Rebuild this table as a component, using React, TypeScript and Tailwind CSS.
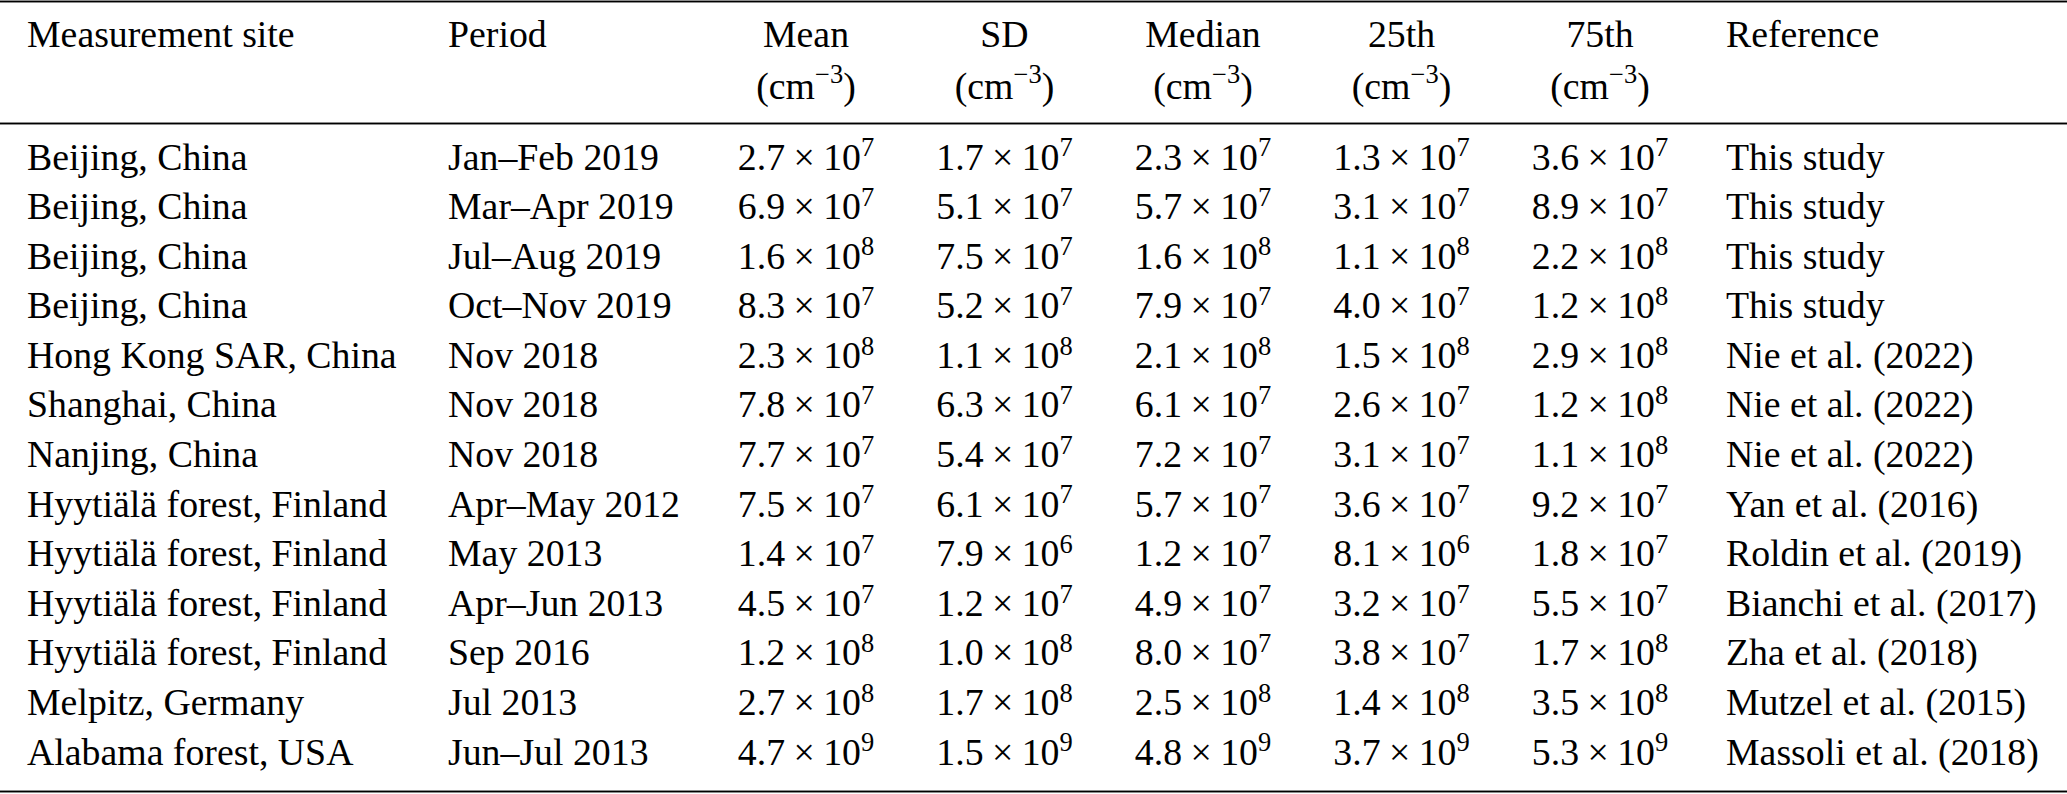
import React from "react";

// Table: gas-phase concentrations at several sites, booktabs style.
type Num = [string, number];
type Row = {
  site: string;
  period: string;
  vals: Num[];
  ref: string;
};

const rows: Row[] = [
  { site: "Beijing, China", period: "Jan–Feb 2019", vals: [["2.7", 7], ["1.7", 7], ["2.3", 7], ["1.3", 7], ["3.6", 7]], ref: "This study" },
  { site: "Beijing, China", period: "Mar–Apr 2019", vals: [["6.9", 7], ["5.1", 7], ["5.7", 7], ["3.1", 7], ["8.9", 7]], ref: "This study" },
  { site: "Beijing, China", period: "Jul–Aug 2019", vals: [["1.6", 8], ["7.5", 7], ["1.6", 8], ["1.1", 8], ["2.2", 8]], ref: "This study" },
  { site: "Beijing, China", period: "Oct–Nov 2019", vals: [["8.3", 7], ["5.2", 7], ["7.9", 7], ["4.0", 7], ["1.2", 8]], ref: "This study" },
  { site: "Hong Kong SAR, China", period: "Nov 2018", vals: [["2.3", 8], ["1.1", 8], ["2.1", 8], ["1.5", 8], ["2.9", 8]], ref: "Nie et al. (2022)" },
  { site: "Shanghai, China", period: "Nov 2018", vals: [["7.8", 7], ["6.3", 7], ["6.1", 7], ["2.6", 7], ["1.2", 8]], ref: "Nie et al. (2022)" },
  { site: "Nanjing, China", period: "Nov 2018", vals: [["7.7", 7], ["5.4", 7], ["7.2", 7], ["3.1", 7], ["1.1", 8]], ref: "Nie et al. (2022)" },
  { site: "Hyytiälä forest, Finland", period: "Apr–May 2012", vals: [["7.5", 7], ["6.1", 7], ["5.7", 7], ["3.6", 7], ["9.2", 7]], ref: "Yan et al. (2016)" },
  { site: "Hyytiälä forest, Finland", period: "May 2013", vals: [["1.4", 7], ["7.9", 6], ["1.2", 7], ["8.1", 6], ["1.8", 7]], ref: "Roldin et al. (2019)" },
  { site: "Hyytiälä forest, Finland", period: "Apr–Jun 2013", vals: [["4.5", 7], ["1.2", 7], ["4.9", 7], ["3.2", 7], ["5.5", 7]], ref: "Bianchi et al. (2017)" },
  { site: "Hyytiälä forest, Finland", period: "Sep 2016", vals: [["1.2", 8], ["1.0", 8], ["8.0", 7], ["3.8", 7], ["1.7", 8]], ref: "Zha et al. (2018)" },
  { site: "Melpitz, Germany", period: "Jul 2013", vals: [["2.7", 8], ["1.7", 8], ["2.5", 8], ["1.4", 8], ["3.5", 8]], ref: "Mutzel et al. (2015)" },
  { site: "Alabama forest, USA", period: "Jun–Jul 2013", vals: [["4.7", 9], ["1.5", 9], ["4.8", 9], ["3.7", 9], ["5.3", 9]], ref: "Massoli et al. (2018)" },
];

const statCols = ["Mean", "SD", "Median", "25th", "75th"];

const grid =
  "grid grid-cols-[421px_259px_198px_199px_198px_199px_198px_1fr] pl-[27px]";

function Rule() {
  return <div className="h-[3px] bg-black border-y border-[#8c8c8c]" />;
}

function Sci({ m, e }: { m: string; e: number }) {
  return (
    <span className="whitespace-nowrap">
      {m}
      <span className="mx-[8.4px]">×</span>
      10
      <sup className="text-[26.5px]">{e}</sup>
    </span>
  );
}

export default function App() {
  return (
    <div className="w-[2067px] h-[794px] bg-white text-black font-['Liberation_Serif',serif] text-[37.8px]">
      <Rule />

      <div className={`${grid} pt-[4.5px] leading-[52.5px]`}>
        <div className="whitespace-nowrap">Measurement site</div>
        <div>Period</div>
        {statCols.map((c) => (
          <div key={c} className="text-center">
            <div>{c}</div>
            <div className="whitespace-nowrap">
              (cm<sup className="text-[26.5px] -top-[16px]">−3</sup>)
            </div>
          </div>
        ))}
        <div className="pl-[27px]">Reference</div>
      </div>

      <div className="mt-[9.5px]">
        <Rule />
      </div>

      <div className="pt-[7.5px] pb-[12.7px] leading-[49.6px]">
        {rows.map((r, i) => (
          <div key={i} className={grid}>
            <div className="whitespace-nowrap">{r.site}</div>
            <div className="whitespace-nowrap">{r.period}</div>
            {r.vals.map(([m, e], j) => (
              <div key={j} className="text-center">
                <Sci m={m} e={e} />
              </div>
            ))}
            <div className="pl-[27px] whitespace-nowrap">{r.ref}</div>
          </div>
        ))}
      </div>

      <Rule />
    </div>
  );
}
